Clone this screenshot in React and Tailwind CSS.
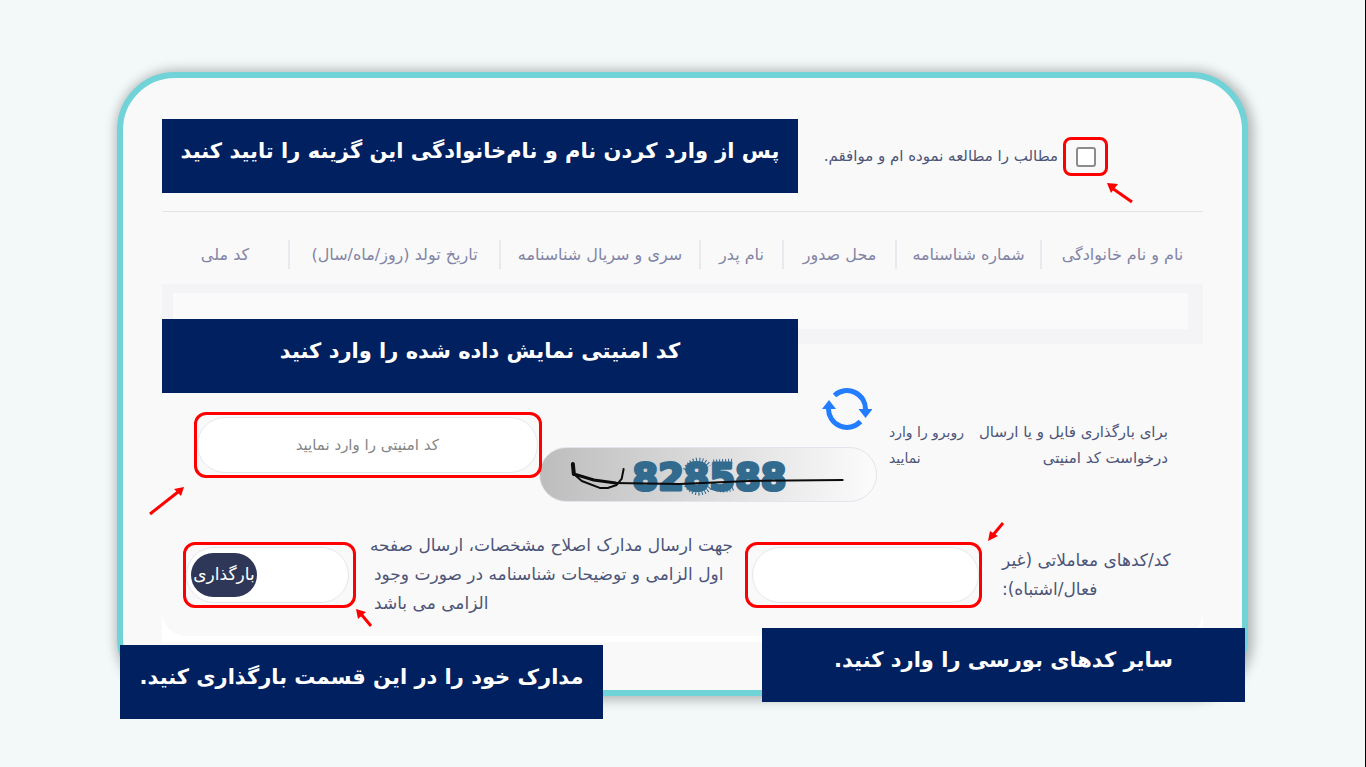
import React, { useState } from "react";

const columns = [
    { title: "نام و نام خانوادگی", width: "w-[163px]" },
    { title: "شماره شناسنامه", width: "w-[145px]" },
    { title: "محل صدور", width: "w-[113px]" },
    { title: "نام پدر", width: "w-[83px]" },
    { title: "سری و سریال شناسنامه", width: "w-[200px]" },
    { title: "تاریخ تولد (روز/ماه/سال)", width: "w-[211px]" },
    { title: "کد ملی", width: "w-[126px]" },
];

const Banner = ({ className = "", children }) => (
    <div className={`flex h-[74px] items-center justify-center bg-[#002060] pb-[9px] text-[21px] font-bold whitespace-nowrap text-white ${className}`}>
        {children}
    </div>
);

const Arrow = ({ className, width, height, line, head }) => (
    <svg className={`absolute ${className}`} width={width} height={height} viewBox={`0 0 ${width} ${height}`} aria-hidden="true">
        <path d={line} stroke="#ff0000" strokeWidth="3" fill="none" />
        <path d={head} fill="#ff0000" />
    </svg>
);

const RefreshIcon = () => (
    <svg width="50" height="42" viewBox="0 0 50 42" aria-hidden="true">
        <g fill="none" stroke="#237dff" strokeWidth="5">
            <path d="M12.5 7.5A18.5 18.5 0 0 1 43.5 22" />
            <path d="M38.5 33.5A18.5 18.5 0 0 1 6.5 20" />
        </g>
        <path d="M36.500 21h14L43.500 30z" fill="#237dff" />
        <path d="M0 21h14L7 12z" fill="#237dff" />
    </svg>
);

const Captcha = () => (
    <div className="h-[55px] overflow-hidden rounded-full border border-[#e2e5ec] bg-linear-to-r from-[#bdbdbd] to-[#fcfcfc]">
        <svg className="h-full w-full" viewBox="0 0 338 53" role="img" aria-label="828588">
            <text x="93" y="42" direction="ltr" fontFamily="DejaVu Sans" fontWeight="bold" fontSize="37" fill="#336b8f" stroke="#336b8f" strokeWidth="3" strokeLinejoin="round">
                828588
            </text>
            <g stroke="#336b8f" strokeWidth="5" strokeDasharray="1 2" fill="none">
                <path d="M146 22Q150 13 158 12Q166 12 170 18" />
                <path d="M147 37Q152 45 160 45Q168 44 172 38" />
                <path d="M174 14L194 13M173 38Q182 45 194 40" />
            </g>
            <g fill="none" stroke="#0c0c0c" strokeLinecap="round" strokeLinejoin="round">
                <path d="M33 16l1 10" strokeWidth="4" />
                <path d="M34 26L54 32L76 35" strokeWidth="3" />
                <path d="M34 26L42 33L60 40H68L77 37L82 31L84 21" strokeWidth="2" />
                <path d="M74 35L140 36L210 33L304 32" strokeWidth="2" />
            </g>
        </svg>
    </div>
);

const App = () => {
    const [agreed, setAgreed] = useState(false);
    const [securityCode, setSecurityCode] = useState("");
    const [tradeCode, setTradeCode] = useState("");

    return (
        <div dir="rtl" className="min-h-screen border-r border-black bg-[#f3f8f8] px-[117px] pt-[72px] pb-[70px] font-['DejaVu_Sans',sans-serif] text-[#4d5578]">
            <main className="relative rounded-[58px] border-6 border-[#6fd3d8] bg-[#f9f9f9] px-[39px] pt-[41px] pb-[48px] shadow-[2px_1px_12px_3px_rgba(0,0,0,0.28)]">
                <div className="flex h-[93px] items-start justify-between border-b border-[#e3e4e8]">
                    <div className="mt-[18px] mr-[95px] flex items-center gap-[5px]">
                        <div className="relative flex h-[39px] w-[45px] items-center justify-center rounded-lg border-3 border-[#ff0000]">
                            <input
                                id="agree"
                                type="checkbox"
                                checked={agreed}
                                onChange={(e) => setAgreed(e.target.checked)}
                                className="size-5 appearance-none rounded-[3px] border-2 border-[#8c8c8c] bg-white checked:bg-[#2e3757]"
                            />
                            <Arrow className="top-[42px] left-[40px]" width={28} height={24} line="M6 6L26 20" head="M1 1L12 2L5 11z" />
                        </div>
                        <label htmlFor="agree" className="text-[15px] whitespace-nowrap">مطالب را مطالعه نموده ام و موافقم.</label>
                    </div>
                    <Banner className="w-[636px]">پس از وارد کردن نام و نام‌خانوادگی این گزینه را تایید کنید</Banner>
                </div>

                <section className="relative bg-white pb-[6px]">
                    <div className="rounded-b-[24px] bg-[#f9f9f9] pb-[18px]">
                        <table className="w-full table-fixed">
                            <thead>
                                <tr>
                                    {columns.map((col, index) => (
                                        <th key={index} className={`px-0 pt-[28px] pb-[15px] font-normal ${col.width}`}>
                                            <div className={`flex h-[29px] items-center justify-center text-base whitespace-nowrap text-[#8285a5] ${index < columns.length - 1 ? "border-l-2 border-[#e8e8ee]" : ""}`}>
                                                {col.title}
                                            </div>
                                        </th>
                                    ))}
                                </tr>
                            </thead>
                            <tbody>
                                <tr>
                                    <td colSpan={7} className="bg-[#f4f4f7] pt-[9px] pr-[15px] pb-[15px] pl-[11px]">
                                        <div className="h-9 bg-[#fafafa]"></div>
                                    </td>
                                </tr>
                            </tbody>
                        </table>

                        <div className="flex items-start pr-[35px] pl-[32px] text-[15px] leading-[26px] whitespace-nowrap">
                            <p className="mt-[75px] w-[191px]">برای بارگذاری فایل و یا ارسال<br />درخواست کد امنیتی</p>
                            <label htmlFor="security-code" className="mt-[75px] mr-[13px] w-[75px] text-left text-sm leading-[26px]">روبرو را وارد<br />نمایید</label>
                            <div className="mt-[44px] mr-3 min-w-0 flex-339">
                                <button type="button" aria-label="تازه سازی" className="mr-[5px] mb-[17px] block cursor-pointer">
                                    <RefreshIcon />
                                </button>
                                <Captcha />
                            </div>
                            <div className="relative mt-[68px] -mr-[3px] min-w-0 flex-341 rounded-xl border-3 border-[#ff0000] py-[2px] pr-[1px]">
                                <input
                                    id="security-code"
                                    type="text"
                                    value={securityCode}
                                    onChange={(e) => setSecurityCode(e.target.value)}
                                    placeholder="کد امنیتی را وارد نمایید"
                                    className="block h-14 w-full rounded-full border border-[#e6e6ee] bg-white text-center text-[15px] placeholder:text-[#858585]"
                                />
                                <Arrow className="top-[71px] -left-[48px]" width={36} height={30} line="M1 28L29 6" head="M35 1L32 10L25 3z" />
                            </div>
                        </div>

                        <div className="mt-[29px] flex items-center pr-[26px] pl-[21px] text-[17px] leading-[29px] whitespace-nowrap">
                            <label htmlFor="trade-code" className="w-[175px] text-left">کد/کدهای معاملاتی (غیر<br />فعال/اشتباه):</label>
                            <div className="relative mr-5 min-w-0 flex-227 rounded-xl border-3 border-[#ff0000] py-[2px] pl-1">
                                <input
                                    id="trade-code"
                                    type="text"
                                    value={tradeCode}
                                    onChange={(e) => setTradeCode(e.target.value)}
                                    className="block h-14 w-full rounded-full border border-[#e6e6ee] bg-white px-5"
                                />
                                <Arrow className="-top-[23px] -right-[26px]" width={18} height={20} line="M16 1L6 13" head="M1 19L3 9L11 14z" />
                            </div>
                            <p className="mr-3 w-[359px] text-left">جهت ارسال مدارک اصلاح مشخصات، ارسال صفحه<br />اول الزامی و توضیحات شناسنامه در صورت وجود<br />الزامی می باشد</p>
                            <div className="relative mr-[18px] min-w-0 flex-163 rounded-xl border-3 border-[#ff0000] py-[2px] pr-1">
                                <div className="flex h-14 items-center justify-end rounded-full border border-[#e6e6ee] bg-white pl-1">
                                    <button type="button" className="h-11 w-[66px] cursor-pointer rounded-full bg-[#2e3757] text-[17px] text-white">بارگذاری</button>
                                </div>
                                <Arrow className="-right-[20px] -bottom-[23px]" width={18} height={20} line="M16 18L6 6" head="M1 1L11 4L3 11z" />
                            </div>
                        </div>
                    </div>
                    <Banner className="absolute top-[107px] left-0 w-[636px]">کد امنیتی نمایش داده شده را وارد کنید</Banner>
                </section>

                <Banner className="absolute -right-[3px] -bottom-[12px] w-[483px]">سایر کدهای بورسی را وارد کنید.</Banner>
                <Banner className="absolute -bottom-[29px] -left-[3px] w-[483px]">مدارک خود را در این قسمت بارگذاری کنید.</Banner>
            </main>
        </div>
    );
};

export default App;
